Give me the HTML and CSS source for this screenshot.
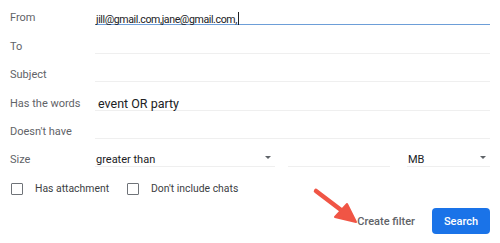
FILE: index.html
```html
<!DOCTYPE html>
<html lang="en">
<head>
  <meta charset="UTF-8" />
  <title>Search filter</title>
  <link rel="stylesheet" href="styles.css">
</head>
<body>
  <form class="filter-form">
    <div class="row">
      <label class="row-label">From</label>
      <div class="field focused email">jill@gmail.com,jane@gmail.com,<span class="caret"></span></div>
    </div>
    <div class="row">
      <label class="row-label">To</label>
      <div class="field"></div>
    </div>
    <div class="row">
      <label class="row-label">Subject</label>
      <div class="field"></div>
    </div>
    <div class="row">
      <label class="row-label">Has the words</label>
      <div class="field words">event OR party</div>
    </div>
    <div class="row">
      <label class="row-label">Doesn't have</label>
      <div class="field"></div>
    </div>
    <div class="row">
      <label class="row-label">Size</label>
      <div class="field select size-op">greater than<span class="arrow"></span></div>
      <div class="field size-num"></div>
      <div class="field select size-unit">MB<span class="arrow"></span></div>
    </div>

    <div class="checks">
      <label class="check"><span class="box"></span>Has attachment</label>
      <label class="check"><span class="box"></span>Don't include chats</label>
    </div>

    <div class="actions">
      <span class="create-filter">Create filter</span>
      <button type="button" class="search-btn">Search</button>
    </div>
  </form>

  <!-- annotation arrow -->
  <svg class="pointer" width="60" height="45" viewBox="0 0 60 45">
    <line x1="5" y1="5" x2="34" y2="27" stroke="#f05545" stroke-width="4.5" stroke-linecap="round" />
    <polygon points="45,36 24,31 36,18" fill="#f05545" stroke="#f05545" stroke-width="2" stroke-linejoin="round" />
  </svg>
</body>
</html>
```

FILE: styles.css
```css
* {
  box-sizing: border-box;
  margin: 0;
  padding: 0;
}
body {
  width: 500px;
  height: 243px;
  background: #fff;
  font-family: Roboto, Arial, sans-serif;
  color: #202124;
  overflow: hidden;
  position: relative;
}

/* Filter form */
.filter-form {
  padding: 1px 10px 0 10px;
}
.row {
  display: flex;
  align-items: flex-end;
  height: 28.4px;
  padding-bottom: 4px;
}
.row-label {
  width: 85px;
  flex: 0 0 auto;
  font-size: 11px;
  line-height: 12px;
  height: 18px;
  padding-top: 5px;
  color: #5f6368;
}
.field {
  position: relative;
  flex: 1;
  height: 18px;
  padding-top: 5px;
  line-height: 12px;
  font-size: 11px;
  padding-left: 1px;
  border-bottom: 1px solid #efefef;
  color: #202124;
  white-space: nowrap;
}
.field.focused {
  border-bottom-color: #6d9ed8;
}
.email {
  font-size: 10.6px;
  letter-spacing: -0.4px;
}
.words {
  font-size: 12.5px;
  padding-left: 3px;
}
.caret {
  display: inline-block;
  width: 1px;
  height: 13px;
  background: #202124;
  vertical-align: -2px;
  margin-left: 1px;
}

/* Size row */
.size-op {
  flex: 0 0 180px;
}
.size-num {
  flex: 0 0 102px;
  margin-left: 13px;
}
.size-unit {
  flex: 0 0 83px;
  margin-left: 17px;
}
.arrow {
  position: absolute;
  right: 4px;
  top: 7px;
  border-left: 3.5px solid transparent;
  border-right: 3.5px solid transparent;
  border-top: 3.5px solid #5f6368;
}

/* Checkboxes */
.checks {
  display: flex;
  align-items: center;
  padding: 11px 0 0 1px;
}
.check {
  display: flex;
  align-items: center;
  font-size: 10.4px;
  color: #3c4043;
  margin-right: 18px;
}
.box {
  width: 12px;
  height: 12px;
  border: 1.5px solid #6f7378;
  border-radius: 1px;
  margin-right: 12px;
}

/* Bottom actions */
.actions {
  display: flex;
  justify-content: flex-end;
  align-items: center;
  margin-top: 13px;
}
.create-filter {
  font-size: 11px;
  font-weight: 500;
  color: #5f6368;
  margin-right: 17px;
}
.search-btn {
  width: 58px;
  height: 26px;
  border: none;
  border-radius: 4px;
  background: #1a73e8;
  color: #fff;
  font-family: Roboto, Arial, sans-serif;
  font-size: 11px;
  font-weight: 500;
}

.pointer {
  position: absolute;
  left: 311px;
  top: 186px;
}
```
